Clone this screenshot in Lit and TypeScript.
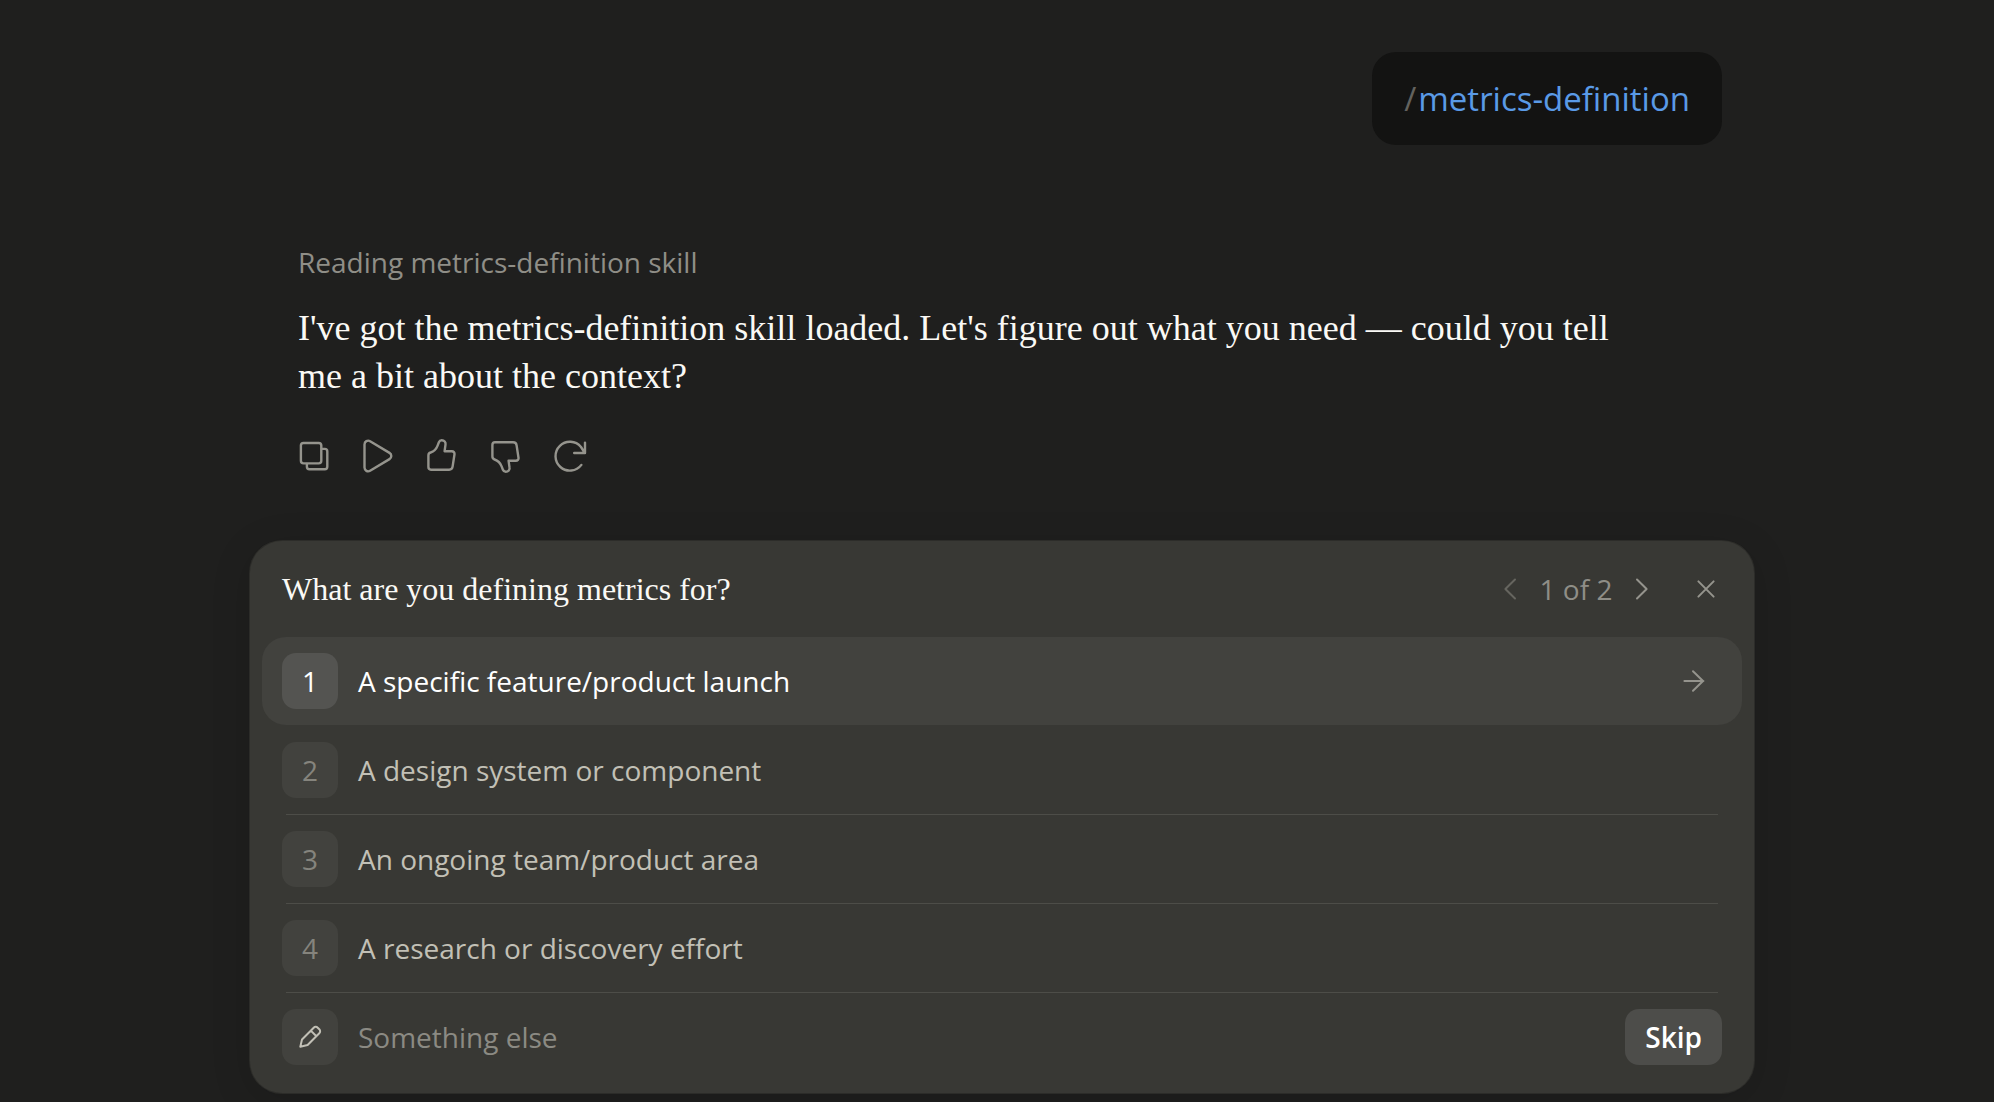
import { LitElement, html, css, svg } from "lit";
import { customElement, property, state } from "lit/decorators.js";
import { classMap } from "lit/directives/class-map.js";

const thumb =
  "M22.6 15.2H29.9a2.6 2.6 0 0 1 2.6 3l-1.9 12.4a3.6 3.6 0 0 1-3.5 3.1H9a2.6 2.6 0 0 1-2.6-2.6V19.4a3 3 0 0 1 2.2-2.9C12.4 15.3 14.3 13 15.6 9.6l1.3-3.4a3 3 0 0 1 2.8-1.9c2.6 0 4.2 2 3.8 4.3z";

const icons = {
  copy: svg`<rect x="6.9" y="7" width="20.4" height="20.4" rx="2.6"/><path d="M27.8 12.9h3a2.5 2.5 0 0 1 2.5 2.5v15.4a2.5 2.5 0 0 1-2.5 2.5H15.4a2.5 2.5 0 0 1-2.5-2.5v-2.9"/>`,
  play: svg`<path d="M6.5 8.4c0-2.9 3.1-4.7 5.6-3.2l19.4 11.7c2.4 1.4 2.4 4.8 0 6.2L12.1 34.8c-2.5 1.5-5.6-.3-5.6-3.2z"/>`,
  up: svg`<path d=${thumb}/>`,
  down: svg`<path d=${thumb} transform="matrix(1 0 0 -1 0 40)"/>`,
  retry: svg`<path d="M31.4 28.9A14.4 14.4 0 1 1 31 11l3.8 6M35 6.6V17H24.2"/>`,
  prev: svg`<path d="M25 10.5 15.4 20l9.6 9.5"/>`,
  next: svg`<path d="M15 10.5 24.6 20 15 29.5"/>`,
  close: svg`<path d="m12.4 12.4 15.2 15.2M27.6 12.4 12.4 27.6"/>`,
  arrow: svg`<path d="M10.4 20h19M19 10.3l10 9.7-10 9.7"/>`,
  pencil: svg`<path d="M10.3 29.7l1.7-7.2L23.7 10.7a2.8 2.8 0 0 1 4 0l1.6 1.6a2.8 2.8 0 0 1 0 4L17.6 28zM20.8 13.6l5.6 5.6"/>`,
};
type IconName = keyof typeof icons;

@customElement("line-icon")
class LineIcon extends LitElement {
  static styles = css`
    :host {
      display: block;
      width: 40px;
      height: 40px;
    }
    .glyph {
      display: block;
      fill: none;
      stroke: currentColor;
      stroke-width: var(--icon-stroke, 2);
      stroke-linecap: round;
      stroke-linejoin: round;
    }
  `;
  @property() name: IconName = "copy";
  render() {
    return html`<svg class="glyph" width="40" height="40" viewBox="0 0 40 40" aria-hidden="true">${icons[this.name]}</svg>`;
  }
}

@customElement("chat-message")
class ChatMessage extends LitElement {
  static styles = css`
    :host {
      display: block;
      padding: 0 64px 0 16px;
    }
    .status {
      margin: 0;
      font: 28px/40px "Open Sans", sans-serif;
      color: #8f8e87;
    }
    .reply {
      margin: 22px 0 24px;
      font: 36px/48px "Liberation Serif", serif;
      color: #faf9f5;
    }
    .actions {
      --icon-stroke: 2.4;
      display: flex;
      margin-left: -16px;
    }
    .action {
      display: grid;
      place-items: center;
      width: 64px;
      height: 64px;
      padding: 0;
      border: 0;
      border-radius: 16px;
      background: none;
      color: #95948d;
      cursor: pointer;
    }
    .action:hover {
      background: #2c2c2a;
    }
  `;
  private actions: [IconName, string][] = [
    ["copy", "Copy"],
    ["play", "Read aloud"],
    ["up", "Good response"],
    ["down", "Bad response"],
    ["retry", "Retry"],
  ];
  render() {
    return html`
      <p class="status">Reading metrics-definition skill</p>
      <p class="reply">
        I've got the metrics-definition skill loaded. Let's figure out what you need — could you tell me a bit about the
        context?
      </p>
      <div class="actions">
        ${this.actions.map(
          ([icon, label]) =>
            html`<button class="action" type="button" aria-label=${label}><line-icon name=${icon}></line-icon></button>`
        )}
      </div>
    `;
  }
}

@customElement("question-card")
class QuestionCard extends LitElement {
  static styles = css`
    :host {
      display: block;
      padding-bottom: 12px;
      border-radius: 32px;
      background: #383834;
      box-shadow: 0 0 0 1px #2c2c29, 0 8px 40px rgba(0, 0, 0, 0.14);
      font: 28px/40px "Open Sans", sans-serif;
      color: #c2c0b6;
    }
    .header {
      display: flex;
      align-items: center;
      height: 96px;
      padding: 0 24px 0 32px;
    }
    .title {
      flex: 1;
      margin: 0;
      font: 32px/40px "Liberation Serif", serif;
      color: #faf9f5;
    }
    .pager {
      display: flex;
      align-items: center;
      margin-right: 16px;
      color: #8f8e87;
    }
    .count {
      min-width: 84px;
      text-align: center;
    }
    .icon-button {
      display: grid;
      place-items: center;
      width: 48px;
      height: 48px;
      padding: 0;
      border: 0;
      background: none;
      color: #95948d;
      cursor: pointer;
    }
    .icon-button:disabled {
      color: #66655f;
      cursor: default;
    }
    .list {
      margin: 0;
      padding: 0 12px;
      list-style: none;
    }
    .item::after {
      content: "";
      display: block;
      height: 1px;
      margin: 0 24px;
      background: #4d4d48;
    }
    .item.active::after {
      background: none;
    }
    .item:last-child::after {
      display: none;
    }
    .row {
      display: flex;
      align-items: center;
      gap: 20px;
      box-sizing: border-box;
      width: 100%;
      height: 88px;
      padding: 0 20px;
      border: 0;
      border-radius: 24px;
      background: none;
      color: inherit;
      font: inherit;
      text-align: left;
    }
    button.row {
      cursor: pointer;
    }
    .badge {
      display: grid;
      place-items: center;
      flex: none;
      width: 56px;
      height: 56px;
      border-radius: 14px;
      background: #42423e;
      color: #85847d;
    }
    .badge.edit {
      color: #c2c0b6;
    }
    .label {
      flex: 1;
    }
    .active .row {
      background: #42423e;
      color: #fff;
    }
    .active .badge {
      background: #545451;
      color: #fff;
    }
    .go {
      margin: 0 8px;
      color: #95948d;
    }
    .other {
      flex: 1;
      min-width: 0;
      padding: 0;
      border: 0;
      outline: 0;
      background: none;
      color: #faf9f5;
      font: inherit;
    }
    .other::placeholder {
      color: #8b8a83;
      opacity: 1;
    }
    .skip {
      height: 56px;
      padding: 0 20px;
      border: 0;
      border-radius: 14px;
      background: #4d4d4a;
      color: #fff;
      font: inherit;
      font-weight: 600;
      cursor: pointer;
    }
  `;
  @state() private selected = 0;
  private options = [
    "A specific feature/product launch",
    "A design system or component",
    "An ongoing team/product area",
    "A research or discovery effort",
  ];
  render() {
    return html`
      <div class="header">
        <h2 class="title">What are you defining metrics for?</h2>
        <div class="pager">
          <button class="icon-button" type="button" aria-label="Previous question" disabled>
            <line-icon name="prev"></line-icon>
          </button>
          <span class="count">1 of 2</span>
          <button class="icon-button" type="button" aria-label="Next question"><line-icon name="next"></line-icon></button>
        </div>
        <button class="icon-button" type="button" aria-label="Close"><line-icon name="close"></line-icon></button>
      </div>
      <ul class="list">
        ${this.options.map(
          (text, i) => html`
            <li class=${classMap({ item: true, active: i === this.selected })}>
              <button class="row" type="button" @mouseenter=${() => (this.selected = i)}>
                <span class="badge">${i + 1}</span>
                <span class="label">${text}</span>
                ${i === this.selected ? html`<line-icon class="go" name="arrow"></line-icon>` : null}
              </button>
            </li>
          `
        )}
        <li class="item">
          <div class="row">
            <label class="badge edit" for="other" aria-label="Something else"><line-icon name="pencil"></line-icon></label>
            <input class="other" id="other" type="text" placeholder="Something else" />
            <button class="skip" type="button">Skip</button>
          </div>
        </li>
      </ul>
    `;
  }
}

@customElement("app-root")
class AppRoot extends LitElement {
  static styles = css`
    :host {
      display: block;
      box-sizing: border-box;
      min-height: 100vh;
      padding: 52px 24px 8px 34px;
      background: #1f1f1e;
    }
    .page {
      display: flex;
      flex-direction: column;
      max-width: 1504px;
      margin: 0 auto;
    }
    .thread {
      display: flex;
      flex-direction: column;
      padding: 0 32px;
    }
    .prompt {
      align-self: flex-end;
      margin-bottom: 97px;
      padding: 24px 32px;
      border-radius: 24px;
      background: #131312;
      font: 33px/45px "Open Sans", sans-serif;
      color: #5a9ae6;
    }
    .slash {
      margin-right: 2px;
      color: #63625e;
    }
    .question {
      margin-top: 53px;
    }
  `;
  render() {
    return html`
      <main class="page">
        <div class="thread">
          <div class="prompt"><span class="slash">/</span>metrics-definition</div>
          <chat-message></chat-message>
        </div>
        <question-card class="question"></question-card>
      </main>
    `;
  }
}
